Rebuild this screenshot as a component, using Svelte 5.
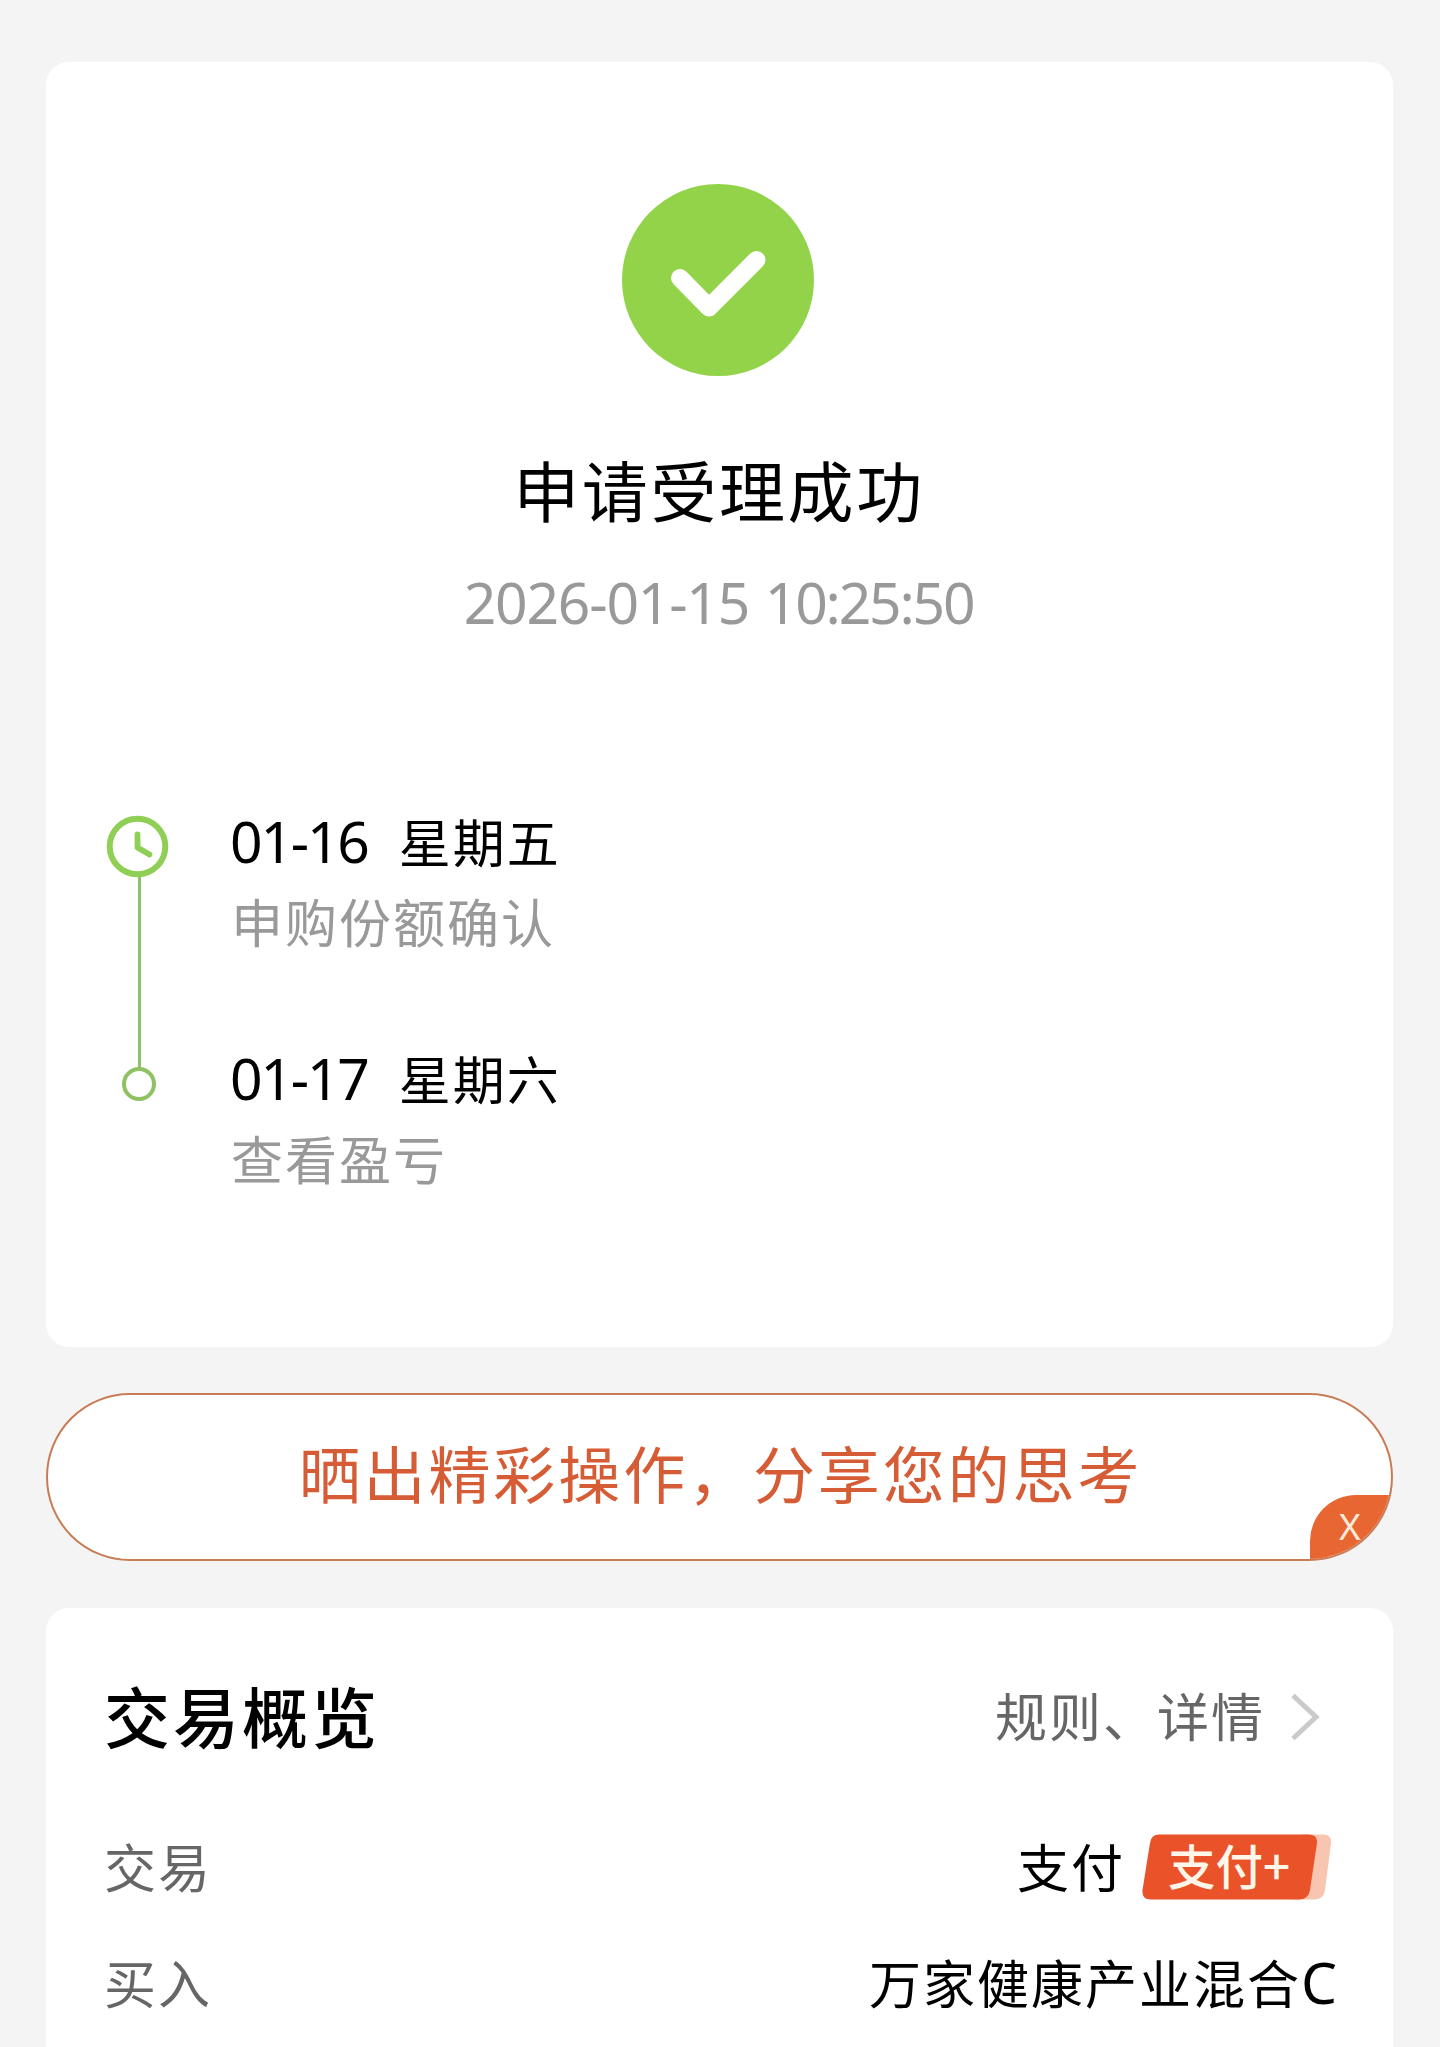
<script>
  const steps = [
    { date: '01-16', day: '星期五', note: '申购份额确认' },
    { date: '01-17', day: '星期六', note: '查看盈亏' },
  ];
</script>

<main class="page">
  <section class="card result">
    <svg class="success" viewBox="0 0 192 192" aria-hidden="true">
      <circle cx="96" cy="96" r="96" fill="#93d34a" />
      <path d="M58 94 L87 123.500 L134.500 76" fill="none" stroke="#fff" stroke-width="18" stroke-linecap="round" stroke-linejoin="round" />
    </svg>
    <h1>申请受理成功</h1>
    <time class="stamp">2026-01-15 <span class="clock">10:25:50</span></time>

    <div class="timeline">
      <svg class="track" viewBox="0 0 64 288" aria-hidden="true">
        <path d="M33.500 62 V253" stroke="#8fc167" stroke-width="3" />
        <circle cx="31.500" cy="31.500" r="27.800" fill="#fff" stroke="#90cf55" stroke-width="6" />
        <path d="M31.500 19.500 V32.500 L43.500 39.500" fill="none" stroke="#90cf55" stroke-width="5.800" stroke-linecap="round" stroke-linejoin="round" />
        <circle cx="33" cy="269" r="15" fill="#fff" stroke="#8fc262" stroke-width="4" />
      </svg>
      <ol class="steps">
        {#each steps as step}
          <li>
            <p class="when"><span class="num">{step.date}</span><span class="day">{step.day}</span></p>
            <p class="note">{step.note}</p>
          </li>
        {/each}
      </ol>
    </div>
  </section>

  <div class="share">
    <span class="share-text">晒出精彩操作，分享您的思考</span>
    <span class="close"><span class="x">X</span></span>
  </div>

  <section class="card overview">
    <header>
      <h2>交易概览</h2>
      <span class="link">
        规则、详情
        <svg class="chevron" viewBox="0 0 32 52" aria-hidden="true">
          <path d="M4 4.500 L27 26 L4 47.500" fill="none" stroke="#cacaca" stroke-width="5" />
        </svg>
      </span>
    </header>
    <div class="row">
      <span class="label">交易</span>
      <span class="value">支付
        <svg class="badge" viewBox="0 0 190 66">
          <path d="M160 0.500 H181 Q190 0.500 189 9 L183 56 Q182 65.500 172 65.500 H150 Z" fill="#f8c5b0" />
          <path d="M17 0.500 H166 Q176 0.500 175 9 L168 56 Q166.500 65.500 157 65.500 H9 Q-0.500 65.500 0.500 56 L8 9 Q9 0.500 17 0.500 Z" fill="#ea5329" />
          <text x="26" y="51">支付+</text>
        </svg>
      </span>
    </div>
    <div class="row">
      <span class="label">买入</span>
      <span class="value">万家健康产业混合<span class="latin">C</span></span>
    </div>
  </section>
</main>

<style>
  :global(body) {
    margin: 0;
    background: #f4f4f4;
  }
  .page {
    box-sizing: border-box;
    width: 1440px;
    height: 2047px;
    padding: 62px 47px 0 46px;
    overflow: hidden;
    background: #f4f4f4;
    color: #000;
    font-family: 'Noto Sans CJK SC', sans-serif;
  }
  h1, h2, p, ol {
    margin: 0;
    padding: 0;
    font-weight: 400;
  }
  ol {
    list-style: none;
  }
  .card {
    box-sizing: border-box;
    background: #fff;
    border-radius: 23px;
  }
  .result {
    height: 1285px;
    padding-top: 122px;
    display: flex;
    flex-direction: column;
    align-items: center;
  }
  .success {
    width: 192px;
    height: 192px;
    margin-right: 3px;
    flex: none;
  }
  h1 {
    margin-top: 72px;
    margin-right: 1px;
    font-size: 66px;
    line-height: 80px;
    letter-spacing: 2.6px;
  }
  .stamp {
    margin-top: 39px;
    margin-right: 2px;
    font-family: 'Noto Sans', sans-serif;
    font-size: 57px;
    line-height: 70px;
    letter-spacing: -1.2px;
    word-spacing: 2px;
    color: #999;
    white-space: nowrap;
  }
  .clock {
    letter-spacing: -2.2px;
  }
  .timeline {
    align-self: stretch;
    display: flex;
    gap: 60px;
    margin-top: 170px;
    padding-left: 60px;
  }
  .track {
    width: 64px;
    height: 288px;
    margin-top: 8px;
    flex: none;
  }
  .steps {
    display: flex;
    flex-direction: column;
    gap: 90px;
  }
  .when {
    display: flex;
    align-items: baseline;
    gap: 31px;
    height: 66px;
    font-size: 52px;
    line-height: 67px;
  }
  .num {
    font-family: 'Noto Sans', sans-serif;
    font-size: 57px;
    letter-spacing: -2.2px;
  }
  .day {
    letter-spacing: 2px;
  }
  .note {
    margin-top: 15px;
    padding-left: 1px;
    font-size: 52px;
    line-height: 66px;
    letter-spacing: 2px;
    color: #999;
  }
  .share {
    position: relative;
    box-sizing: border-box;
    height: 168px;
    margin-top: 46px;
    padding-bottom: 10px;
    border: 2px solid #c87c55;
    border-radius: 84px;
    background: #fff;
    overflow: hidden;
    display: flex;
    align-items: center;
    justify-content: center;
  }
  .share-text {
    font-size: 62px;
    line-height: 80px;
    letter-spacing: 2.900px;
    padding-left: 2px;
    color: #d65c36;
  }
  .close {
    position: absolute;
    right: 0;
    bottom: 0;
    box-sizing: border-box;
    width: 81px;
    height: 64px;
    padding-left: 29px;
    border-top-left-radius: 46px;
    background: #e86632;
  }
  .x {
    font-family: 'Noto Sans', sans-serif;
    font-size: 37px;
    line-height: 62px;
    color: #fdebdc;
  }
  .overview {
    height: 520px;
    margin-top: 47px;
    padding: 66px 56px 0 58px;
  }
  header, .row {
    display: flex;
    justify-content: space-between;
    height: 80px;
    line-height: 80px;
  }
  h2 {
    font-size: 66px;
    font-weight: 500;
    letter-spacing: 3px;
  }
  .link, .row {
    font-size: 52px;
    letter-spacing: 2px;
  }
  .link {
    display: flex;
    align-items: center;
    gap: 24px;
    margin: 2px 16px 0 0;
  }
  .link, .label {
    color: #666;
  }
  .chevron {
    width: 32px;
    height: 52px;
    margin-top: 3px;
  }
  .row {
    margin-top: 72px;
  }
  .row + .row {
    margin-top: 36px;
  }
  .value {
    display: flex;
    align-items: center;
    white-space: nowrap;
  }
  .badge {
    width: 190px;
    height: 66px;
    margin: 1px 5px 0 17px;
    overflow: visible;
    fill: #fff6ea;
    font-size: 47.500px;
    font-weight: 500;
    letter-spacing: 0;
  }
  .latin {
    font-family: 'Noto Sans', sans-serif;
    font-size: 57px;
    letter-spacing: 0;
  }
</style>
